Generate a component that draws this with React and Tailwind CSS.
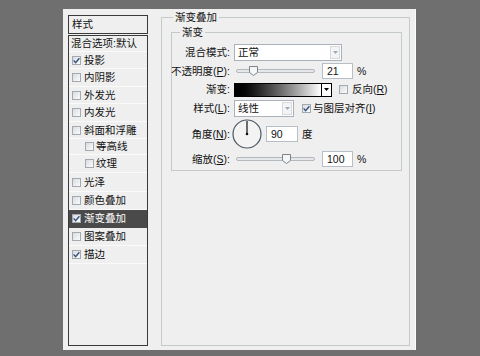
import React from "react";

function Box({ checked }) {
  return (
    <span className="w-[9px] h-[9px] shrink-0 border border-[#a3a9b0] bg-linear-to-br from-[#d9dcdf] to-[#fbfbfb] flex items-center justify-center">
      {checked && (
        <svg width="7" height="7" viewBox="0 0 7 7">
          <path d="M0.6 3.4 L2.6 5.6 L6.4 1.2" stroke="#33507e" strokeWidth="1.4" fill="none" />
        </svg>
      )}
    </span>
  );
}

function Row({ label, h, checked, sub, active }) {
  return (
    <div
      className={
        "flex items-center border-b " +
        (active ? "bg-[#4a4a4a] text-white border-[#4a4a4a] " : "border-[#fafafa] ") +
        (sub ? "pl-[16px] gap-[2px] " : "pl-[3px] gap-[3px] ")
      }
      style={{ height: h }}
    >
      <Box checked={checked} />
      <span>{label}</span>
    </div>
  );
}

function Slider({ pos }) {
  return (
    <div className="relative w-[79px] h-[16px] ml-[2px] flex items-center">
      <div className="w-full h-[4px] rounded-full border border-[#b4b9be] bg-[#e6e7e8]" />
      <svg className="absolute top-[3px]" style={{ left: pos }} width="9" height="10" viewBox="0 0 9 10">
        <path d="M0.5 0.5 H8.5 V6.5 L4.5 9.5 L0.5 6.5 Z" fill="#f4f5f6" stroke="#7c838b" strokeWidth="1" />
      </svg>
    </div>
  );
}

function Select({ w, text }) {
  return (
    <div className={"h-[17px] border border-[#aab1b8] bg-white flex items-center justify-between " + w}>
      <span className="pl-[3px]">{text}</span>
      <span className="w-[10px] h-[13px] mr-[1px] border border-[#d6d9dc] bg-[#f3f4f5] flex items-center justify-center">
        <svg width="5" height="3" viewBox="0 0 5 3">
          <path d="M0 0 H5 L2.5 3 Z" fill="#a4a8ad" />
        </svg>
      </span>
    </div>
  );
}

function Input({ w, v }) {
  return (
    <div className={"h-[16px] border border-[#b7bec6] bg-white flex items-center pl-[4px] " + w}>{v}</div>
  );
}

function U({ c }) {
  return <span className="underline underline-offset-1">{c}</span>;
}

function Label({ children }) {
  return <div className="w-[58px] shrink-0 flex justify-end whitespace-nowrap">{children}</div>;
}

export default function App() {
  return (
    <div className="w-[480px] h-[356px] bg-[#6f6f6f] pl-[63px] pt-[9px] font-['Liberation_Sans','Noto_Sans_CJK_SC',sans-serif] text-[10.5px] leading-none text-[#111]">
      <div className="w-[353px] h-[341px] bg-[#efefef] border-r border-[#fbfbfb] flex pl-[5px] pr-[5px]">
        {/* left list */}
        <div className="w-[80px] mt-[6px] mb-[4px] flex flex-col">
          <div className="h-[19px] border border-[#3a3a3a] flex items-center pl-[3px]">样式</div>
          <div className="mt-[1px] flex-1 border border-[#3a3a3a] flex flex-col">
            <div className="h-[16px] flex items-center pl-[2px] border-b border-[#fafafa]">混合选项:默认</div>
            <Row label="投影" h={17} checked />
            <Row label="内阴影" h={18} />
            <Row label="外发光" h={17} />
            <Row label="内发光" h={18} />
            <Row label="斜面和浮雕" h={17} />
            <Row label="等高线" h={16} sub />
            <Row label="纹理" h={18} sub />
            <Row label="光泽" h={19} />
            <Row label="颜色叠加" h={18} />
            <Row label="渐变叠加" h={18} checked active />
            <Row label="图案叠加" h={18} />
            <Row label="描边" h={18} checked />
          </div>
        </div>

        {/* right */}
        <fieldset className="ml-[13px] w-[249px] mb-[4px] border border-[#c4caca]">
          <legend className="ml-[11px] px-[2px] leading-[16px]">渐变叠加</legend>
          <fieldset className="ml-[9px] mr-[7px] border border-[#c4caca] pt-[5px] pb-[3px]">
            <legend className="ml-[8px] px-[2px] leading-[14px]">渐变</legend>
            <div className="flex flex-col">
              <div className="flex items-center h-[17px]">
                <Label>混合模式:</Label>
                <div className="ml-[4px]"><Select w="w-[108px]" text="正常" /></div>
              </div>
              <div className="flex items-center h-[16px] mt-[2px]">
                <Label>不透明度(<U c="P" />):</Label>
                <div className="ml-[4px] flex items-center">
                  <Slider pos={13} />
                  <div className="ml-[7px]"><Input w="w-[31px]" v="21" /></div>
                  <span className="ml-[4px]">%</span>
                </div>
              </div>
              <div className="flex items-center h-[15px] mt-[3px]">
                <Label>渐变:</Label>
                <div className="ml-[4px] flex items-center">
                  <div className="w-[98px] h-[14px] border border-black flex">
                    <div className="flex-1 bg-linear-to-r from-black to-white" />
                    <div className="w-[10px] border-l border-black bg-white flex items-center justify-center">
                      <svg width="5" height="3" viewBox="0 0 5 3"><path d="M0 0 H5 L2.5 3 Z" fill="#000" /></svg>
                    </div>
                  </div>
                  <span className="ml-[7px]"><Box /></span>
                  <span className="ml-[4px] whitespace-nowrap">反向(<U c="R" />)</span>
                </div>
              </div>
              <div className="flex items-center h-[17px] mt-[3px]">
                <Label>样式(<U c="L" />):</Label>
                <div className="ml-[4px] flex items-center">
                  <Select w="w-[60px]" text="线性" />
                  <span className="ml-[8px]"><Box checked /></span>
                  <span className="ml-[2px] whitespace-nowrap">与图层对齐(<U c="I" />)</span>
                </div>
              </div>
              <div className="flex items-center h-[30px] mt-[2px]">
                <Label>角度(<U c="N" />):</Label>
                <div className="ml-[2px] flex items-center">
                  <svg width="30" height="30" viewBox="0 0 30 30">
                    <circle cx="15" cy="15" r="14" fill="#f3f3f3" stroke="#4c5563" strokeWidth="1.2" />
                    <line x1="15" y1="15" x2="15" y2="2" stroke="#111" strokeWidth="1.2" />
                    <circle cx="15" cy="15" r="1.3" fill="#111" />
                  </svg>
                  <div className="ml-[4px]"><Input w="w-[32px]" v="90" /></div>
                  <span className="ml-[4px]">度</span>
                </div>
              </div>
              <div className="flex items-center h-[16px] mt-[2px]">
                <Label>缩放(<U c="S" />):</Label>
                <div className="ml-[4px] flex items-center">
                  <Slider pos={46} />
                  <div className="ml-[7px]"><Input w="w-[31px]" v="100" /></div>
                  <span className="ml-[4px]">%</span>
                </div>
              </div>
            </div>
          </fieldset>
        </fieldset>
      </div>
    </div>
  );
}
